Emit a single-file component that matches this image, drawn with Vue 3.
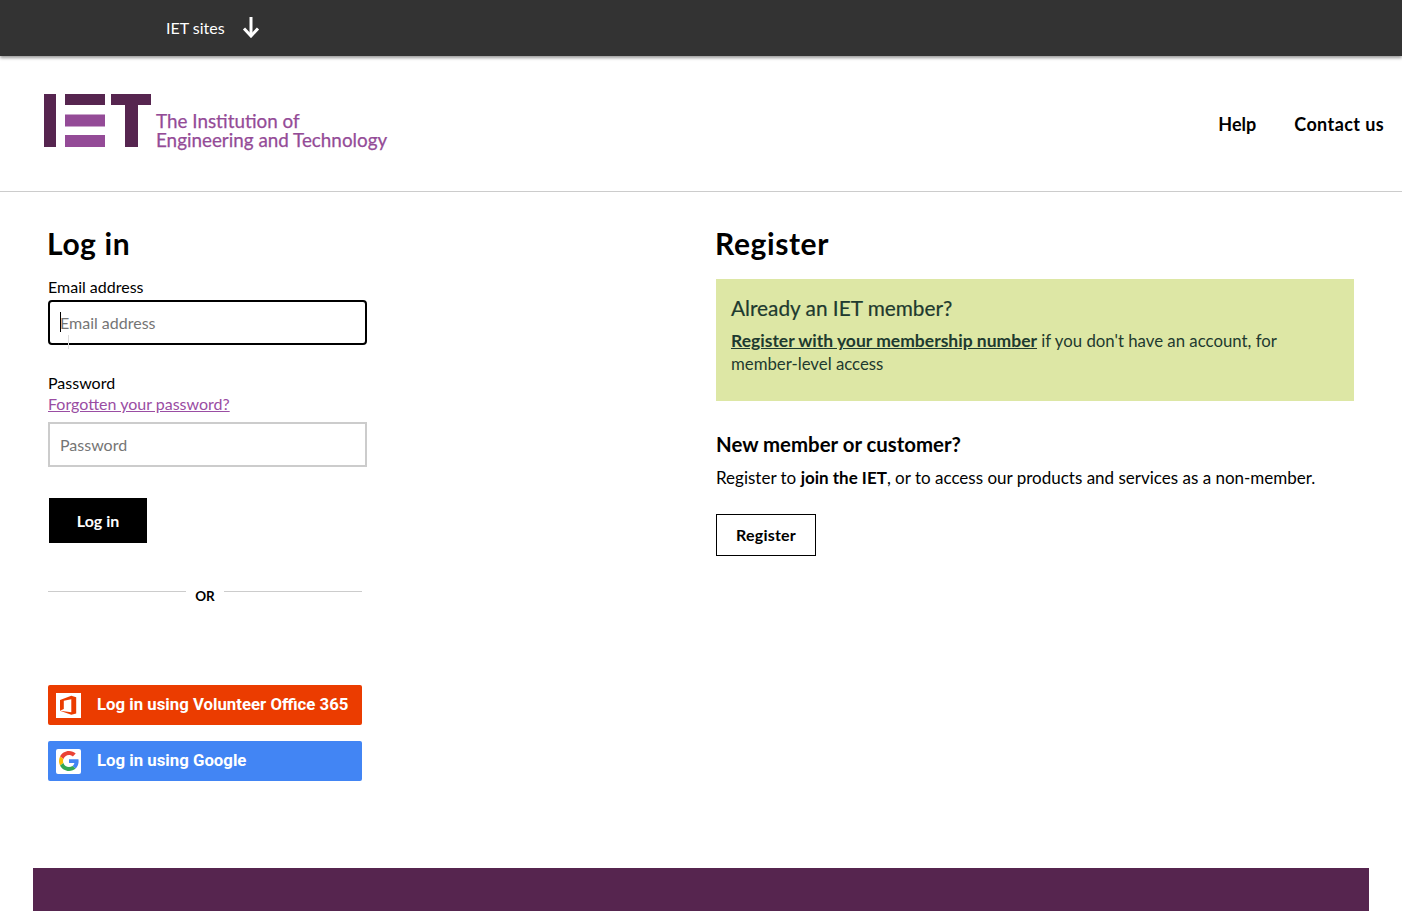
<script setup>
const email = ''
</script>

<template>
  <div class="page">
    <div class="topbar">
      <span class="sites">IET sites</span>
      <svg class="arrow" width="18" height="22" viewBox="0 0 18 22" fill="none" stroke="#fff" stroke-width="3">
        <path d="M9 1v18" />
        <path d="M2 12.5l7 7.5 7-7.5" />
      </svg>
    </div>

    <header class="header">
      <div class="logo">
        <svg class="mark" width="108" height="53" viewBox="0 0 108 53">
          <rect x="0" y="0" width="12" height="53" fill="#56254f" />
          <rect x="21" y="0" width="40" height="11" fill="#56254f" />
          <rect x="21" y="20.500" width="40" height="12" fill="#944b97" />
          <rect x="21" y="41" width="40" height="12" fill="#944b97" />
          <rect x="67" y="0" width="40" height="11" fill="#56254f" />
          <rect x="81" y="0" width="13" height="53" fill="#56254f" />
        </svg>
        <div class="logo-text">
          <div>The Institution of</div>
          <div>Engineering and Technology</div>
        </div>
      </div>
      <nav class="nav">
        <a>Help</a>
        <a class="contact">Contact us</a>
      </nav>
    </header>

    <main class="main">
      <section class="login">
        <h1>Log in</h1>
        <label class="lbl first">Email address</label>
        <div class="field">
          <input class="input focused" type="text" placeholder="Email address" :value="email" />
          <span class="caret"></span>
          <span class="ibeam"></span>
        </div>
        <label class="lbl second">Password</label>
        <a class="forgot">Forgotten your password?</a>
        <input class="input" type="password" placeholder="Password" />
        <button class="btn-login">Log in</button>

        <div class="or">
          <span class="rule"></span>
          <span class="or-text">OR</span>
          <span class="rule"></span>
        </div>

        <a class="sso office">
          <span class="sso-icon">
            <svg width="20" height="20" viewBox="0 0 20 20">
              <path fill="#eb3c00" d="M1 5 12.300 .8 17.200 2.200V18.400L12.300 19.800 1 15.800l11.300 1.500V4.200L4.800 5.800v8.300L1 15.800z" />
            </svg>
          </span>
          <span class="sso-label">Log in using Volunteer Office 365</span>
        </a>
        <a class="sso google">
          <span class="sso-icon">
            <svg width="20" height="20" viewBox="0 0 48 48">
              <path fill="#ea4335" d="M24 9.500c3.500 0 6.700 1.200 9.200 3.600l6.900-6.900C35.900 2.400 30.500 0 24 0 14.600 0 6.500 5.400 2.600 13.200l8 6.200C12.500 13.700 17.800 9.500 24 9.500z" />
              <path fill="#4285f4" d="M47 24.500c0-1.600-.1-3.100-.4-4.500H24v9h12.900c-.6 3-2.200 5.500-4.800 7.200l7.700 6C44.400 38 47 31.800 47 24.500z" />
              <path fill="#fbbc05" d="M10.500 28.600c-.5-1.400-.8-3-.8-4.600s.3-3.200.8-4.600l-8-6.200C.9 16.500 0 20.100 0 24s.9 7.500 2.600 10.800l7.900-6.200z" />
              <path fill="#34a853" d="M24 48c6.500 0 11.900-2.100 15.900-5.800l-7.700-6c-2.200 1.500-4.900 2.300-8.200 2.300-6.200 0-11.500-4.200-13.400-9.900l-8 6.200C6.500 42.600 14.600 48 24 48z" />
            </svg>
          </span>
          <span class="sso-label">Log in using Google</span>
        </a>
      </section>

      <section class="register">
        <h1>Register</h1>
        <div class="member">
          <h2>Already an IET member?</h2>
          <p><a>Register with your membership number</a> if you don't have an account, for member-level access</p>
        </div>
        <h3>New member or customer?</h3>
        <p class="intro">Register to <strong>join the IET</strong>, or to access our products and services as a non-member.</p>
        <button class="btn-register"><span>Register</span></button>
      </section>
    </main>

    <footer class="footer"></footer>
  </div>
</template>

<style>
html, body {
  margin: 0;
  background: #fff;
}
</style>

<style scoped>
.page {
  height: 911px;
  display: flex;
  flex-direction: column;
  overflow: hidden;
  font-family: Lato, "Open Sans", sans-serif;
  color: #000;
}

.topbar {
  height: 56px;
  flex: none;
  background: #333;
  box-shadow: 0 2px 3px rgba(0, 0, 0, 0.4);
  display: flex;
  align-items: center;
  padding-left: 166px;
  box-sizing: border-box;
  position: relative;
}

.sites {
  color: #fff;
  font-size: 16px;
  padding-bottom: 2px;
}

.arrow {
  margin-left: 17px;
  margin-bottom: 2px;
}

.header {
  height: 136px;
  flex: none;
  box-sizing: border-box;
  border-bottom: 1px solid #ccc;
  display: flex;
  justify-content: space-between;
  padding: 38px 18px 0 44px;
}

.logo {
  display: flex;
  align-items: flex-start;
  gap: 4px;
}

.logo-text {
  margin-top: 17px;
  color: #944b97;
  font-size: 18.85px;
  line-height: 19px;
  -webkit-text-stroke: 0.25px #944b97;
}

.nav {
  display: flex;
  gap: 38px;
  font-size: 18px;
  font-weight: 700;
  padding-top: 19px;
}

.contact {
  letter-spacing: 0.4px;
}

.main {
  flex: 1;
  display: grid;
  grid-template-columns: 668px 638px;
  padding-left: 48px;
}

h1 {
  margin: 33px 0 0 -1px;
  font-size: 30px;
  line-height: 36px;
  font-weight: 700;
  letter-spacing: 0.6px;
}

.login {
  display: flex;
  flex-direction: column;
  align-items: flex-start;
}

.lbl {
  font-size: 16px;
  line-height: 20px;
}

.lbl.first {
  margin-top: 16px;
  margin-bottom: 3px;
}

.lbl.second {
  margin-top: 28px;
}

.forgot {
  color: #9a4da3;
  text-decoration: underline;
  font-size: 16px;
  line-height: 22px;
  margin-bottom: 7px;
}

.field {
  position: relative;
}

.input {
  display: block;
  width: 319px;
  height: 45px;
  box-sizing: border-box;
  border: 2px solid #ccc;
  padding: 0 10px;
  font-family: inherit;
  font-size: 16px;
  outline: none;
  background: #fff;
}

.input::placeholder {
  color: #757575;
}

.focused {
  border-color: #000;
  border-radius: 4px;
}

.caret {
  position: absolute;
  left: 12px;
  top: 12px;
  width: 1px;
  height: 20px;
  background: #000;
}

.ibeam {
  position: absolute;
  left: 20px;
  top: 35px;
  width: 1px;
  height: 14px;
  background: #ddd;
}

.btn-login {
  margin: 31px 0 0 1px;
  width: 98px;
  height: 45px;
  border: none;
  background: #000;
  color: #fff;
  font-family: inherit;
  font-size: 16px;
  font-weight: 700;
}

.or {
  width: 314px;
  display: flex;
  align-items: flex-start;
  margin-top: 48px;
  height: 94px;
}

.rule {
  flex: 1;
  height: 1px;
  background: #ccc;
}

.or-text {
  width: 38px;
  text-align: center;
  font-size: 13.5px;
  font-weight: 700;
  line-height: 16px;
  margin-top: -3px;
}

.sso {
  width: 314px;
  height: 40px;
  border-radius: 2px;
  display: flex;
  align-items: center;
  gap: 16px;
  padding-left: 8px;
  box-sizing: border-box;
  color: #fff;
  font-family: Roboto, sans-serif;
  font-size: 16.8px;
  font-weight: 700;
}

.sso-label {
  padding-bottom: 2px;
}

.office {
  background: #eb3c00;
}

.google {
  background: #4285f4;
  margin-top: 16px;
}

.sso-icon {
  width: 25px;
  height: 25px;
  background: #fff;
  display: flex;
  align-items: center;
  justify-content: center;
  flex: none;
}

.google .sso-icon {
  border-radius: 2px;
}

.member {
  margin-top: 18px;
  background: #dde7a5;
  color: #1e3a2f;
  height: 122px;
  box-sizing: border-box;
  padding: 16px 60px 15px 15px;
}

h2 {
  margin: 0;
  font-size: 20.8px;
  line-height: 26px;
  font-weight: 400;
  -webkit-text-stroke: 0.2px #1e3a2f;
}

.member p {
  margin: 8px 0 0;
  font-size: 16.8px;
  line-height: 23px;
}

.member a {
  font-size: 17.5px;
  font-weight: 700;
  text-decoration: underline;
}

h3 {
  margin: 30px 0 0;
  font-size: 20.4px;
  line-height: 26px;
  font-weight: 700;
}

.intro {
  margin: 9px 0 0;
  font-size: 17px;
  line-height: 24px;
}

.btn-register {
  display: block;
  margin-top: 24px;
  width: 100px;
  height: 42px;
  background: #fff;
  border: 1px solid #000;
  padding: 0 0 2px;
  font-family: inherit;
  font-size: 16px;
  font-weight: 700;
  letter-spacing: 0.2px;
  color: #000;
}

.footer {
  flex: none;
  height: 43px;
  margin: 0 33px;
  background: #56254f;
}
</style>
